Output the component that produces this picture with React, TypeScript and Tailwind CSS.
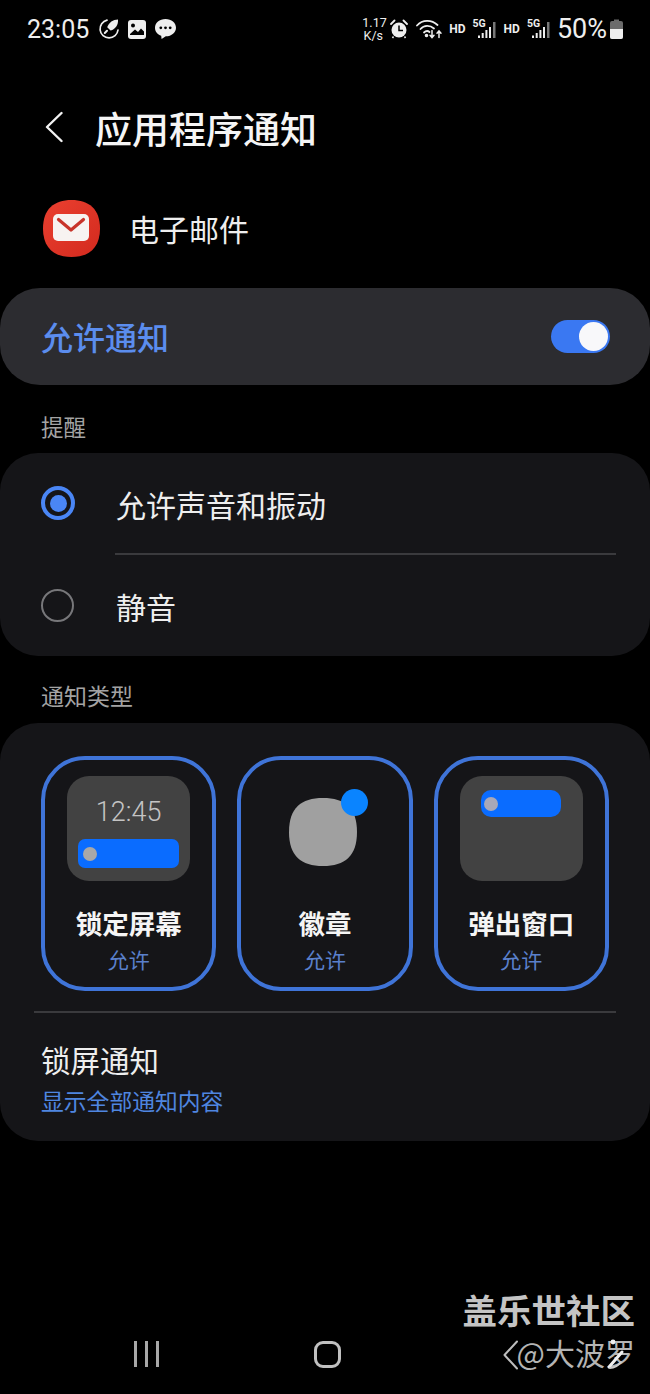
import React from "react";

const cjk = "font-['Noto_Sans_CJK_SC','Noto_Sans',sans-serif]";

const AlertIcon: React.FC = () => (
  <svg width="22" height="22" viewBox="0 0 22 22" fill="none" stroke="#eeeeee">
    <path d="M9 2.2 A9 9 0 1 0 20 12" strokeWidth="1.7" strokeLinecap="round" />
    <path d="M20 1.5 C15 1.5 11 4.5 9.2 9.2 L12.6 12.6 C17.4 11 20.5 7 20 1.5 Z" fill="#eeeeee" stroke="none" />
    <path d="M6.8 15 L9 12.8" strokeWidth="2" strokeLinecap="round" />
  </svg>
);

const GalleryIcon: React.FC = () => (
  <svg width="18" height="19" viewBox="0 0 18 19">
    <rect x="0" y="0" width="18" height="19" rx="3" fill="#eeeeee" />
    <circle cx="5" cy="5.5" r="2" fill="#000" />
    <path d="M2 14 L7 9.5 L10 12 L13 8.5 L16 11.5 V15 H2 Z" fill="#000" />
  </svg>
);

const ChatIcon: React.FC = () => (
  <svg width="23" height="22" viewBox="0 0 23 22">
    <path d="M11.5 1 C5.5 1 1 4.8 1 9.7 C1 13.6 3.6 16.5 7.2 17.8 L7.6 21 L11.8 18.3 C17.6 18.2 22 14.5 22 9.7 C22 4.8 17.5 1 11.5 1 Z" fill="#eeeeee" />
    <circle cx="6.8" cy="9.8" r="1.4" fill="#000" />
    <circle cx="11.5" cy="9.8" r="1.4" fill="#000" />
    <circle cx="16.2" cy="9.8" r="1.4" fill="#000" />
  </svg>
);

const AlarmIcon: React.FC = () => (
  <svg width="18" height="20" viewBox="0 0 18 20">
    <circle cx="9" cy="11" r="7.5" fill="#eeeeee" />
    <path d="M9 6.5 V11.5 H13" fill="none" stroke="#000" strokeWidth="1.5" />
    <path d="M1 5 L4.5 1.5 M17 5 L13.5 1.5" stroke="#eeeeee" strokeWidth="1.8" strokeLinecap="round" />
    <path d="M3.5 17.5 L2.5 19 M14.5 17.5 L15.5 19" stroke="#eeeeee" strokeWidth="1.5" />
  </svg>
);

const WifiIcon: React.FC = () => (
  <svg width="27" height="20" viewBox="0 0 27 20" fill="none" stroke="#eeeeee" strokeWidth="1.8" strokeLinecap="round">
    <path d="M1 6.5 C6.5 0.5 15.5 0.5 21.5 6" />
    <path d="M4.5 10 C8 6 14 6 18 9.5" />
    <path d="M8 13.5 C9.8 11.8 12 11.8 13.5 13" />
    <circle cx="10.5" cy="16.5" r="0.9" fill="#eeeeee" />
    <path d="M16 11.5 V18.5 M14 16.2 L16 18.5 L18 16.2" strokeWidth="1.5" />
    <path d="M23 18.5 V12 M21 14.3 L23 12 L25 14.3" strokeWidth="1.5" />
  </svg>
);

const SignalIcon: React.FC = () => (
  <div className="relative w-[24px] h-[20px]">
    <span className="absolute left-0 top-[-1px] text-[10.5px] leading-[12px] font-bold text-[#eeeeee] font-['Roboto',sans-serif]">5G</span>
    <svg width="24" height="20" viewBox="0 0 24 20" className="absolute left-0 top-0">
      <rect x="5" y="16.5" width="2" height="2.5" fill="#eeeeee" />
      <rect x="8.7" y="14" width="2" height="5" fill="#eeeeee" />
      <rect x="12.4" y="11" width="2" height="8" fill="#eeeeee" />
      <rect x="16" y="8" width="2" height="11" fill="#eeeeee" />
      <rect x="20" y="3" width="2.5" height="16" fill="#777777" />
    </svg>
  </div>
);

const Battery: React.FC = () => (
  <svg width="13" height="20" viewBox="0 0 13 20">
    <path d="M4 0.5 H9 V2 H11 Q13 2 13 4 V18 Q13 20 11 20 H2 Q0 20 0 18 V4 Q0 2 2 2 H4 Z" fill="#6b6b6b" />
    <path d="M0 10 H13 V18 Q13 20 11 20 H2 Q0 20 0 18 Z" fill="#eeeeee" />
  </svg>
);

const AppIcon: React.FC = () => (
  <svg width="57" height="57" viewBox="0 0 57 57">
    <defs>
      <linearGradient id="mailRed" x1="0" y1="0" x2="1" y2="1">
        <stop offset="0" stopColor="#ea4030" />
        <stop offset="1" stopColor="#d32a1e" />
      </linearGradient>
    </defs>
    <path d="M28.5 0 C46 0 57 9 57 28.5 C57 48 46 57 28.5 57 C11 57 0 48 0 28.5 C0 9 11 0 28.5 0 Z" fill="url(#mailRed)" />
    <rect x="10" y="14" width="36" height="27" rx="5" fill="#f7f3f1" />
    <path d="M15.5 19.5 L28 30 L40.5 19.5" fill="none" stroke="#c8342a" strokeWidth="3.2" strokeLinecap="round" strokeLinejoin="round" />
  </svg>
);

const Radio: React.FC<{ on?: boolean }> = ({ on }) =>
  on ? (
    <div className="w-[34px] h-[34px] rounded-full border-4 border-[#4a86f5] flex items-center justify-center">
      <div className="w-[17px] h-[17px] rounded-full bg-[#4a86f5]" />
    </div>
  ) : (
    <div className="w-[33px] h-[33px] rounded-full border-2 border-[#77777a]" />
  );

const LockPreview: React.FC = () => (
  <div className="w-[123px] h-[105px] rounded-[22px] bg-[#424242] flex flex-col items-center pt-[21px]">
    <span className="text-[27px] leading-[30px] font-light text-[#c4c4c4] font-['Roboto',sans-serif]">12:45</span>
    <div className="mt-[12px] w-[101px] h-[29px] rounded-[7px] bg-[#0a6cff] flex items-center pl-[5px]">
      <div className="w-[14px] h-[14px] rounded-full bg-[#a8a8a8]" />
    </div>
  </div>
);

const BadgePreview: React.FC = () => (
  <div className="w-[123px] h-[105px] flex items-center justify-center pr-[4px]">
    <div className="relative w-[68px] h-[68px] mt-[6px]">
      <svg width="68" height="68" viewBox="0 0 68 68">
        <path d="M34 0 C56 0 68 10 68 34 C68 58 56 68 34 68 C12 68 0 58 0 34 C0 10 12 0 34 0 Z" fill="#a0a0a0" />
      </svg>
      <div className="absolute right-[-11px] top-[-9px] w-[27px] h-[27px] rounded-full bg-[#0a84ff]" />
    </div>
  </div>
);

const PopupPreview: React.FC = () => (
  <div className="w-[123px] h-[105px] rounded-[22px] bg-[#424242] pt-[14px] pl-[21px]">
    <div className="w-[80px] h-[27px] rounded-[10px] bg-[#0a6cff] flex items-center pl-[3px]">
      <div className="w-[14px] h-[14px] rounded-full bg-[#a8a8b8]" />
    </div>
  </div>
);

const types = [
  { name: "锁定屏幕", preview: <LockPreview /> },
  { name: "徽章", preview: <BadgePreview /> },
  { name: "弹出窗口", preview: <PopupPreview /> },
];

const App: React.FC = () => {
  return (
    <div className={`relative w-[650px] h-[1394px] bg-black overflow-hidden flex flex-col ${cjk}`}>
      {/* Status bar */}
      <div className="h-[58px] flex items-center justify-between pl-[27px] pr-[27px] font-['Roboto',sans-serif] text-[#eeeeee]">
        <div className="flex items-center">
          <span className="text-[25px] leading-none w-[71px]">23:05</span>
          <div className="flex items-center gap-[8px]">
            <AlertIcon />
            <GalleryIcon />
            <ChatIcon />
          </div>
        </div>
        <div className="flex items-center">
          <div className="w-[22px] text-[12.5px] leading-[13px] text-center">
            <div>1.17</div>
            <div>K/s</div>
          </div>
          <div className="ml-[6px]"><AlarmIcon /></div>
          <div className="ml-[8px]"><WifiIcon /></div>
          <span className="ml-[6px] text-[12px] font-bold">HD</span>
          <div className="ml-[7px]"><SignalIcon /></div>
          <span className="ml-[7px] text-[12px] font-bold">HD</span>
          <div className="ml-[7px]"><SignalIcon /></div>
          <span className="ml-[6px] text-[27px] leading-none">50%</span>
          <div className="ml-[3px]"><Battery /></div>
        </div>
      </div>

      {/* Header */}
      <div className="mt-[42px] h-[60px] flex items-center pl-[45px]">
        <svg width="18" height="32" viewBox="0 0 18 32" fill="none" stroke="#f2f2f2" strokeWidth="2.4" strokeLinecap="round" strokeLinejoin="round" className="-mt-[6px]">
          <path d="M16.5 2 L2 16 L16.5 30" />
        </svg>
        <h1 className="ml-[32px] -mt-[4px] text-[37px] leading-none font-medium text-[#f5f5f5]">应用程序通知</h1>
      </div>

      {/* App row */}
      <div className="mt-[40px] flex items-center pl-[43px]">
        <AppIcon />
        <span className="ml-[29px] -mt-[2px] text-[30px] leading-none text-[#eeeeee]">电子邮件</span>
      </div>

      {/* Allow switch */}
      <div className="mt-[31px] h-[97px] rounded-[40px] bg-[#2c2c30] flex items-center justify-between pl-[41px] pr-[40px]">
        <span className="-mt-[2px] text-[32px] leading-none font-medium text-[#5b8dee]">允许通知</span>
        <div className="w-[59px] h-[33px] rounded-full bg-[#3a78f2] flex items-center justify-end pr-[2px]">
          <div className="w-[29px] h-[29px] rounded-full bg-[#f8f8fa]" />
        </div>
      </div>

      <div className="h-[68px] pl-[41px] pt-[29px] text-[22.5px] leading-[24px] text-[#a3a3a3]">提醒</div>

      {/* Alert options */}
      <div className="h-[203px] rounded-[38px] bg-[#151518] flex flex-col text-[#eeeeee]">
        <div className="h-[100px] flex items-center pl-[41px] pr-[34px]">
          <Radio on />
          <span className="ml-[41px] text-[30px] leading-none pt-[1px]">允许声音和振动</span>
        </div>
        <div className="ml-[115px] mr-[34px] h-[2px] bg-[#3a3a3d]" />
        <div className="h-[101px] flex items-center pl-[41px]">
          <Radio />
          <span className="ml-[42px] text-[30px] leading-none">静音</span>
        </div>
      </div>

      <div className="h-[67px] pl-[41px] pt-[27px] text-[23px] leading-[24px] text-[#a3a3a3]">通知类型</div>

      {/* Notification types */}
      <div className="h-[418px] rounded-[38px] bg-[#151518] pt-[33px]">
        <div className="grid grid-cols-3 gap-[21px] px-[41px]">
          {types.map((t) => (
            <div key={t.name} className="h-[235px] rounded-[44px] border-4 border-[#3f74d8] flex flex-col items-center pt-[16px]">
              {t.preview}
              <span className="mt-[27px] text-[26.5px] leading-[30px] font-bold text-[#f5f5f5]">{t.name}</span>
              <span className="mt-[9px] text-[21px] leading-[24px] text-[#5a80cc]">允许</span>
            </div>
          ))}
        </div>
        <div className="mt-[20px] mx-[34px] h-[2px] bg-[#3a3a3d]" />
        <div className="pl-[41px] pt-[28px]">
          <div className="text-[29.5px] leading-[36px] text-[#eeeeee]">锁屏通知</div>
          <div className="mt-[11px] text-[22.8px] leading-[26px] text-[#4f86e0]">显示全部通知内容</div>
        </div>
      </div>

      {/* Nav bar */}
      <div className="mt-auto h-[53px] flex items-start pl-[134px]">
        <div className="flex gap-[8px] h-[26px]">
          <div className="w-[3px] bg-[#a8a8a8]" />
          <div className="w-[3px] bg-[#a8a8a8]" />
          <div className="w-[3px] bg-[#a8a8a8]" />
        </div>
        <div className="ml-[155px] w-[27px] h-[27px] rounded-[9px] border-[3px] border-[#c0c0c0]" />
        <svg width="15" height="30" viewBox="0 0 15 30" fill="none" stroke="#bdbdbd" strokeWidth="2" strokeLinecap="round" strokeLinejoin="round" className="ml-[162px] -mt-[1px]">
          <path d="M14 1.5 L1.5 15 L14 28.5" />
        </svg>
      </div>

      {/* Watermark */}
      <div className="absolute right-[15px] top-[1288px] flex flex-col items-end">
        <span className="text-[34.5px] leading-[42px] font-bold text-[#c4c4c4]">盖乐世社区</span>
        <div className="relative mt-[2px]">
          <span className="text-[30px] leading-[40px] text-[#b4b4b4]">@大波罗</span>
          <svg width="22" height="36" viewBox="0 0 22 36" fill="none" stroke="#f0f0f0" strokeLinecap="round" className="absolute right-[10px] top-[3px]">
            <circle cx="10" cy="7" r="2.4" fill="#f0f0f0" stroke="none" />
            <path d="M19 17 L6 32" strokeWidth="3" />
            <path d="M7 33 C11 33 15 31 18 27" strokeWidth="2" stroke="#cccccc" />
          </svg>
        </div>
      </div>
    </div>
  );
};

export default App;
